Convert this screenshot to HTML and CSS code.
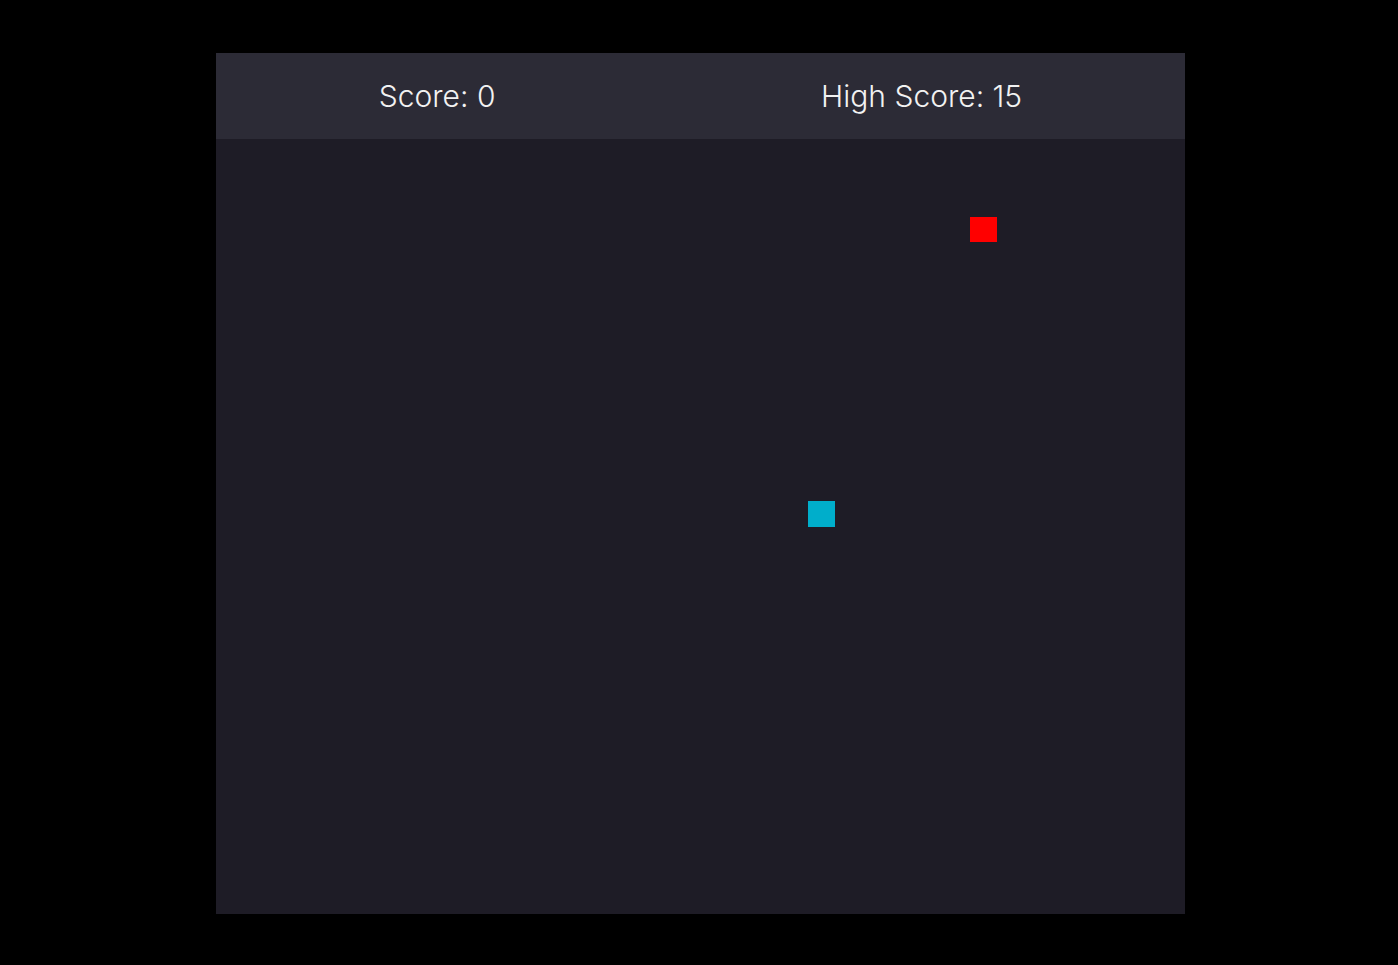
FILE: index.html
```html
<!DOCTYPE html>
<html lang="en">
<head>
<meta charset="utf-8">
<title>Snake</title>
<link rel="stylesheet" href="styles.css">
</head>
<body>
<main class="wrapper">
  <section class="game">
    <header class="scoreboard">
      <span class="score">Score: 0</span>
      <span class="score">High Score: 15</span>
    </header>
    <div class="board">
      <div class="cell food"></div>
      <div class="cell snake"></div>
    </div>
  </section>
</main>
</body>
</html>
```
FILE: styles.css
```css
html, body {
  margin: 0;
  padding: 0;
  background: #000;
  height: 100%;
}
.wrapper {
  display: flex;
  justify-content: center;
  padding-top: 53px;
  padding-left: 3px;
}
.game {
  width: 969px;
  display: flex;
  flex-direction: column;
}
.scoreboard {
  height: 86px;
  background: #2c2b36;
  display: flex;
  align-items: center;
  justify-content: space-around;
  color: #f2f2f2;
  font-family: "Inter", "Open Sans", sans-serif;
  font-weight: 300;
  font-size: 30px;
}
.score {
  padding-bottom: 1px;
}
.board {
  height: 775px;
  background: #1e1c26;
  display: grid;
  grid-template-columns: repeat(36, 1fr);
  grid-template-rows: repeat(30, 1fr);
}
.food {
  background: #ff0000;
  grid-column: 29;
  grid-row: 4;
}
.snake {
  background: #00aecb;
  grid-column: 23;
  grid-row: 15;
}
```
